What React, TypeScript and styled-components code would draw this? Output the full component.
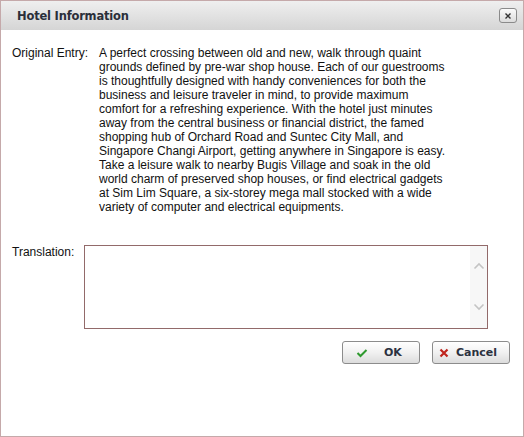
import React from "react";
import styled, { createGlobalStyle } from "styled-components";

const Global = createGlobalStyle`
  html, body { margin: 0; padding: 0; background: #fff; }
  * { box-sizing: border-box; }
`;

const Dialog = styled.div`
  width: 524px;
  height: 437px;
  border: 1px solid #c5a9aa;
  background: #fff;
  display: flex;
  flex-direction: column;
  font-family: "Liberation Sans", Arial, sans-serif;
`;

const Header = styled.div`
  height: 29px;
  flex: none;
  display: flex;
  align-items: center;
  justify-content: space-between;
  padding: 0 6px 0 16px;
  background: linear-gradient(#efefef, #d5d5d5);
`;

const Title = styled.div`
  font-family: "DejaVu Sans", Verdana, sans-serif;
  font-weight: bold;
  font-size: 11.5px;
  color: #2b2f3a;
  letter-spacing: -0.2px;
`;

const CloseBtn = styled.div`
  width: 18px;
  height: 15px;
  border: 1px solid #8a8a8a;
  border-radius: 3px;
  background: linear-gradient(#fbfbfb, #dcdcdc);
  display: flex;
  align-items: center;
  justify-content: center;
`;

const Body = styled.div`
  flex: 1;
  display: flex;
  flex-direction: column;
  padding: 16px 12px 0 11px;
  font-size: 12px;
  color: #111;
`;

const Row = styled.div<{ $label: number }>`
  display: grid;
  grid-template-columns: ${(p) => p.$label}px 1fr;
  align-items: start;
`;

const Label = styled.div`
  line-height: 14px;
`;

const Paragraph = styled.div`
  line-height: 14px;
  width: 360px;
`;

const Line = styled.div`
  white-space: nowrap;
`;

const TransRow = styled(Row)`
  margin-top: 31px;
`;

const TextBox = styled.div`
  width: 404px;
  height: 84px;
  border: 1px solid #926a6a;
  display: flex;
  justify-content: flex-end;
`;

const ScrollCol = styled.div`
  width: 17px;
  background: #f7f7f7;
  display: flex;
  flex-direction: column;
  justify-content: space-between;
  align-items: center;
  padding: 16px 0 17px;
`;

const Buttons = styled.div`
  display: flex;
  justify-content: flex-end;
  gap: 12px;
  margin-top: 12px;
  padding-right: 1px;
`;

const Button = styled.div<{ $gap: number; $pad: number }>`
  width: 78px;
  height: 23px;
  border: 1px solid #8c8c8c;
  border-radius: 3px;
  background: linear-gradient(#ffffff 0%, #f1f1f1 50%, #dcdcdc 100%);
  display: flex;
  align-items: center;
  gap: ${(p) => p.$gap}px;
  padding-left: ${(p) => p.$pad}px;
  font-family: "DejaVu Sans", Verdana, sans-serif;
  font-weight: bold;
  font-size: 11px;
  color: #2b3140;
`;

const LINES = [
  "A perfect crossing between old and new, walk through quaint",
  "grounds defined by pre-war shop house. Each of our guestrooms",
  "is thoughtfully designed with handy conveniences for both the",
  "business and leisure traveler in mind, to provide maximum",
  "comfort for a refreshing experience. With the hotel just minutes",
  "away from the central business or financial district, the famed",
  "shopping hub of Orchard Road and Suntec City Mall, and",
  "Singapore Changi Airport, getting anywhere in Singapore is easy.",
  "Take a leisure walk to nearby Bugis Village and soak in the old",
  "world charm of preserved shop houses, or find electrical gadgets",
  "at Sim Lim Square, a six-storey mega mall stocked with a wide",
  "variety of computer and electrical equipments.",
];

export default function App() {
  return (
    <>
      <Global />
      <Dialog>
        <Header>
          <Title>Hotel Information</Title>
          <CloseBtn>
            <svg width="8" height="8" viewBox="0 0 8 8">
              <path d="M1.5 1.5 L6.5 6.5 M6.5 1.5 L1.5 6.5" stroke="#333" strokeWidth="1.4" />
            </svg>
          </CloseBtn>
        </Header>
        <Body>
          <Row $label={87}>
            <Label>Original Entry:</Label>
            <Paragraph>
              {LINES.map((l) => (
                <Line key={l}>{l}</Line>
              ))}
            </Paragraph>
          </Row>
          <TransRow $label={72}>
            <Label>Translation:</Label>
            <TextBox>
              <ScrollCol>
                <svg width="12" height="8" viewBox="0 0 12 8">
                  <path d="M1.5 6.5 L6 2 L10.5 6.5" stroke="#c4c4c4" strokeWidth="1.6" fill="none" />
                </svg>
                <svg width="12" height="8" viewBox="0 0 12 8">
                  <path d="M1.5 1.5 L6 6 L10.5 1.5" stroke="#c4c4c4" strokeWidth="1.6" fill="none" />
                </svg>
              </ScrollCol>
            </TextBox>
          </TransRow>
          <Buttons>
            <Button $gap={16} $pad={13}>
              <svg width="12" height="10" viewBox="0 0 12 10">
                <path d="M1.5 5 L4.5 8 L10.5 2" stroke="#2f9a2f" strokeWidth="2" fill="none" />
              </svg>
              OK
            </Button>
            <Button $gap={7} $pad={6}>
              <svg width="10" height="10" viewBox="0 0 10 10">
                <path d="M1.5 1.5 L8.5 8.5 M8.5 1.5 L1.5 8.5" stroke="#c0241d" strokeWidth="2.2" />
              </svg>
              Cancel
            </Button>
          </Buttons>
        </Body>
      </Dialog>
    </>
  );
}
